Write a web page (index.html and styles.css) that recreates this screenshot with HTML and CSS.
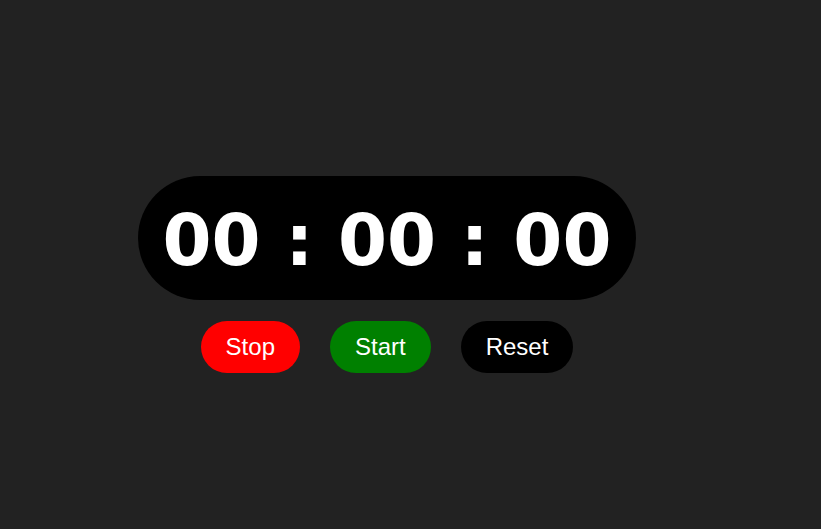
FILE: index.html
```html
<!DOCTYPE html>
<html>
<head>
<meta charset="utf-8">
<link rel="stylesheet" href="styles.css">
</head>
<body>
<div class="stopwatch">
  <div class="display">00 : 00 : 00</div>
  <div class="controls">
    <button class="btn btn-stop">Stop</button>
    <button class="btn btn-start">Start</button>
    <button class="btn btn-reset">Reset</button>
  </div>
</div>
</body>
</html>
```
FILE: styles.css
```css
html, body {
  margin: 0;
  padding: 0;
  background: #222222;
  height: 100%;
}
.stopwatch {
  display: flex;
  flex-direction: column;
  align-items: center;
  width: 498px;
  margin-left: 138px;
  padding-top: 176px;
}
.display {
  box-sizing: border-box;
  width: 498px;
  height: 124px;
  padding-top: 6px;
  display: flex;
  align-items: center;
  justify-content: center;
  background: #000;
  color: #fff;
  border-radius: 62px;
  font-family: "DejaVu Sans", Verdana, sans-serif;
  font-weight: bold;
  font-size: 70.5px;
  white-space: pre;
}
.controls {
  display: flex;
  gap: 30px;
  margin-top: 21px;
}
.btn {
  box-sizing: border-box;
  height: 52px;
  padding: 0 25px;
  border: none;
  border-radius: 26px;
  color: #fff;
  font-family: "Liberation Sans", Arial, sans-serif;
  font-size: 24px;
  cursor: pointer;
}
.btn-stop { background: #ff0000; }
.btn-start { background: #008000; }
.btn-reset { background: #000000; }
```
